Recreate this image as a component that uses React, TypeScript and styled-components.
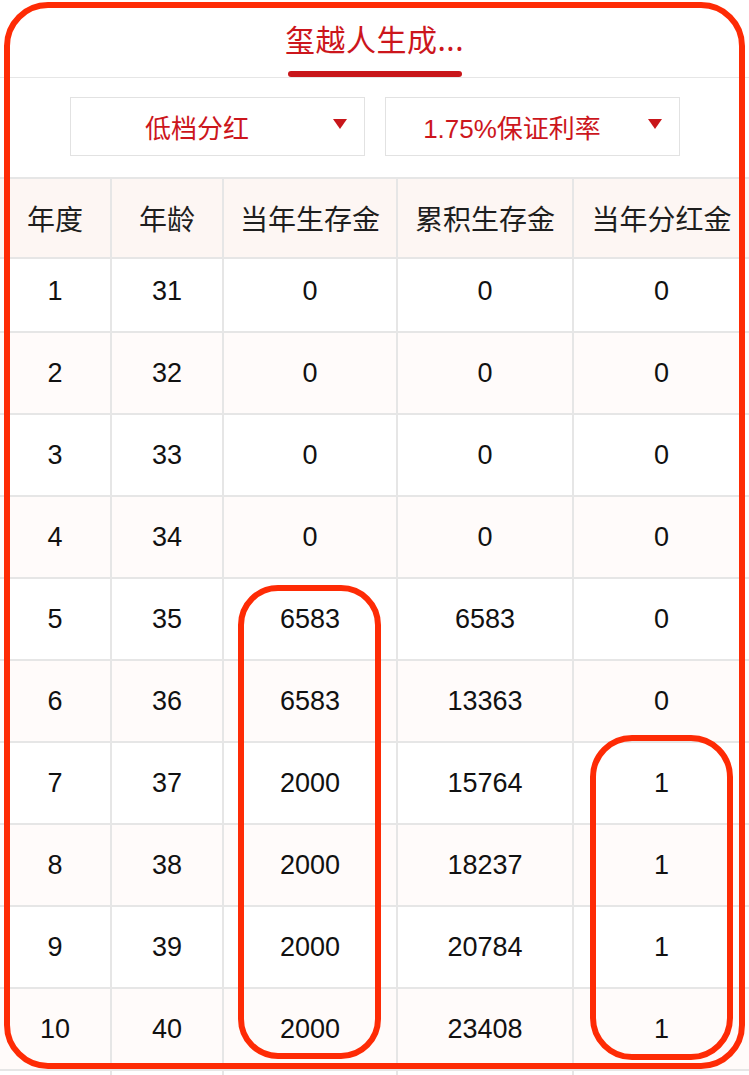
import React from "react";
import styled, { createGlobalStyle } from "styled-components";

const GlobalStyle = createGlobalStyle`
  html, body {
    margin: 0;
    padding: 0;
    background: #ffffff;
    overflow: hidden;
  }
  body {
    font-family: "Liberation Sans", "Noto Sans CJK SC", sans-serif;
  }
  * { box-sizing: border-box; }
`;

const LINE = "#e6e6e6";
const RED = "#cc161c";
const MARK = "#fe2b05";

const Page = styled.div`
  position: relative;
  width: 749px;
  height: 1075px;
  overflow: hidden;
`;

const TitleBar = styled.div`
  height: 78px;
  border-bottom: 1px solid ${LINE};
  display: flex;
  flex-direction: column;
  align-items: center;
`;

const Title = styled.div`
  margin-top: 18px;
  font-size: 30px;
  line-height: 40px;
  color: ${RED};
  font-family: "Noto Sans CJK SC", "Liberation Sans", sans-serif;
  letter-spacing: 0.5px;
`;

const Indicator = styled.div`
  margin-top: 13px;
  width: 174px;
  height: 8px;
  border-radius: 4px;
  background: #c8161a;
  position: relative;
  z-index: 1;
`;

const Filters = styled.div`
  display: flex;
  justify-content: center;
  gap: 20px;
  padding: 19px 0 21px;
`;

const Dropdown = styled.div`
  width: 295px;
  height: 59px;
  border: 1px solid #e2e2e2;
  display: flex;
  align-items: center;
`;

const DropLabel = styled.span`
  flex: 1;
  text-align: center;
  padding-right: 9px;
  font-size: 26px;
  color: ${RED};
`;

const Caret = styled.span`
  width: 0;
  height: 0;
  border-left: 7.5px solid transparent;
  border-right: 7.5px solid transparent;
  border-top: 10px solid #c8161a;
  margin-right: 17px;
  margin-bottom: 5px;
`;

const Table = styled.div`
  border-top: 2px solid ${LINE};
`;

const Row = styled.div<{ $bg: string; $h: number }>`
  display: grid;
  grid-template-columns: 112px 112px 174px 176px 175px;
  height: ${(p) => p.$h}px;
  background: ${(p) => p.$bg};
  border-bottom: 2px solid ${LINE};
`;

const Cell = styled.div<{ $head?: boolean; $shift?: number }>`
  display: flex;
  align-items: center;
  justify-content: center;
  border-right: 2px solid ${LINE};
  padding-bottom: ${(p) => p.$shift ?? 0}px;
  font-size: ${(p) => (p.$head ? 28 : 27)}px;
  color: ${(p) => (p.$head ? "#1e1e1e" : "#111111")};
  &:last-child {
    border-right: none;
  }
`;

const Mark = styled.div<{ $r: number }>`
  position: absolute;
  border: 6px solid ${MARK};
  border-radius: ${(p) => p.$r}px;
  pointer-events: none;
`;

const headers = ["年度", "年龄", "当年生存金", "累积生存金", "当年分红金"];

const rows: (string | number)[][] = [
  [1, 31, 0, 0, 0],
  [2, 32, 0, 0, 0],
  [3, 33, 0, 0, 0],
  [4, 34, 0, 0, 0],
  [5, 35, 6583, 6583, 0],
  [6, 36, 6583, 13363, 0],
  [7, 37, 2000, 15764, 1],
  [8, 38, 2000, 18237, 1],
  [9, 39, 2000, 20784, 1],
  [10, 40, 2000, 23408, 1],
];

export default function App() {
  return (
    <Page>
      <GlobalStyle />
      <TitleBar>
        <Title>玺越人生成...</Title>
        <Indicator />
      </TitleBar>
      <Filters>
        <Dropdown>
          <DropLabel>低档分红</DropLabel>
          <Caret />
        </Dropdown>
        <Dropdown>
          <DropLabel>1.75%保证利率</DropLabel>
          <Caret />
        </Dropdown>
      </Filters>
      <Table>
        <Row $bg="#fdf6f3" $h={80}>
          {headers.map((h) => (
            <Cell key={h} $head>
              {h}
            </Cell>
          ))}
        </Row>
        {rows.map((r, i) => (
          <Row
            key={i}
            $bg={i % 2 === 1 ? "#fffbfa" : "#ffffff"}
            $h={i === 0 ? 74 : 82}
          >
            {r.map((v, j) => (
              <Cell key={j} $shift={i === 0 ? 8 : 0}>
                {v}
              </Cell>
            ))}
          </Row>
        ))}
        <Row $bg="#ffffff" $h={82}>
          {headers.map((h) => (
            <Cell key={h} />
          ))}
        </Row>
      </Table>
      <Mark $r={44} style={{ left: 4, top: 2, width: 741, height: 1067 }} />
      <Mark $r={40} style={{ left: 238, top: 585, width: 143, height: 474 }} />
      <Mark $r={42} style={{ left: 590, top: 735, width: 143, height: 325 }} />
    </Page>
  );
}
